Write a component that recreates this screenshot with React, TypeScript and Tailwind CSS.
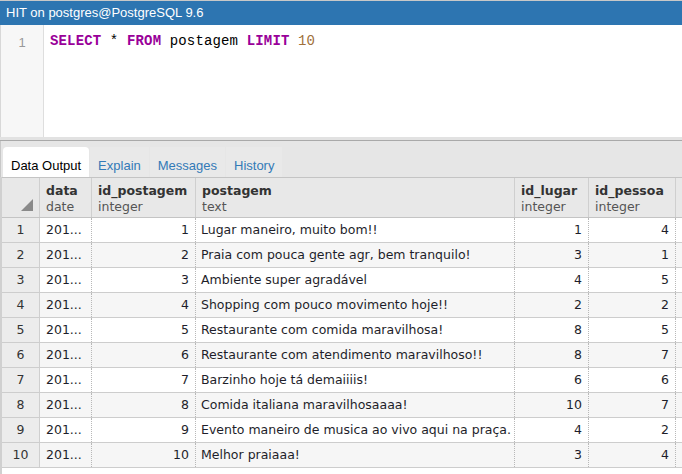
const rows: [number, string, number, number][] = [
  [1, 'Lugar maneiro, muito bom!!', 1, 4],
  [2, 'Praia com pouca gente agr, bem tranquilo!', 3, 1],
  [3, 'Ambiente super agradável', 4, 5],
  [4, 'Shopping com pouco movimento hoje!!', 2, 2],
  [5, 'Restaurante com comida maravilhosa!', 8, 5],
  [6, 'Restaurante com atendimento maravilhoso!!', 8, 7],
  [7, 'Barzinho hoje tá demaiiiis!', 6, 6],
  [8, 'Comida italiana maravilhosaaaa!', 10, 7],
  [9, 'Evento maneiro de musica ao vivo aqui na praça.', 4, 2],
  [10, 'Melhor praiaaa!', 3, 4],
]

const cols = 'grid grid-cols-[38px_52px_104px_319px_74px_87px]'

function HeaderCell({ name, type }: { name: string; type: string }) {
  return (
    <div className="flex flex-col justify-center border-r border-[#cfcfcf] px-[6px] pt-[2px] leading-[16px]">
      <span className="font-bold text-[#333]">{name}</span>
      <span className="text-[#555]">{type}</span>
    </div>
  )
}

export default function App() {
  return (
    <div className="flex h-[474px] w-[682px] flex-col overflow-hidden bg-white font-['Liberation_Sans',sans-serif]">
      <div className="h-px bg-[#c8c8c8]" />
      <div className="flex h-[24px] items-center bg-[#2d75b1] px-[6px] text-[13px] text-white">
        HIT on postgres@PostgreSQL 9.6
      </div>

      {/* editor */}
      <div className="flex h-[112px] border-l border-[#d8d8d8]">
        <div className="w-[43px] border-r border-[#dedede] bg-[#f7f7f7] pt-[8px] text-center text-[13px] text-[#999]">
          1
        </div>
        <div className="pl-[6px] pt-[6px] font-['Liberation_Mono',monospace] text-[14px] tracking-[0.15px] text-black">
          <span className="font-bold text-[#990099]">SELECT</span> *{' '}
          <span className="font-bold text-[#990099]">FROM</span> postagem{' '}
          <span className="font-bold text-[#990099]">LIMIT</span>{' '}
          <span className="text-[#a0703a]">10</span>
        </div>
      </div>
      <div className="h-[3px] bg-[#e2e2e2]" />
      <div className="h-px bg-[#a9a9a9]" />

      {/* tabs */}
      <div className="flex h-[36px] items-end border-l border-[#c8c8c8] bg-[#e6e6e6] pl-[2px] text-[13px]">
        <div className="flex h-[30px] items-center rounded-t-[4px] bg-white px-[8px] pt-[8px] text-black">
          Data Output
        </div>
        <div className="ml-px flex h-[30px] items-center bg-[#e9e9e9] px-[8px] pt-[8px] text-[#337ab7]">
          Explain
        </div>
        <div className="ml-px flex h-[30px] items-center bg-[#e9e9e9] px-[8px] pt-[8px] text-[#337ab7]">
          Messages
        </div>
        <div className="ml-px flex h-[30px] items-center bg-[#e9e9e9] px-[8px] pt-[8px] text-[#337ab7]">
          History
        </div>
      </div>

      {/* grid */}
      <div className="flex-1 border-l-2 border-[#d0d0d0] font-['DejaVu_Sans',sans-serif] text-[12.5px]">
        <div className={`${cols} h-[41px] border-t border-b border-[#c4c4c4] bg-[#e8e8e8]`}>
          <div className="relative border-r border-[#cfcfcf]">
            <svg className="absolute bottom-[6px] right-[6px]" width="12" height="12" viewBox="0 0 12 12">
              <polygon points="12,0 12,12 0,12" fill="#8a8a8a" />
            </svg>
          </div>
          <HeaderCell name="data" type="date" />
          <HeaderCell name="id_postagem" type="integer" />
          <HeaderCell name="postagem" type="text" />
          <HeaderCell name="id_lugar" type="integer" />
          <HeaderCell name="id_pessoa" type="integer" />
        </div>
        {rows.map(([id, text, lugar, pessoa], i) => (
          <div
            key={id}
            className={`${cols} h-[25px] border-b border-[#cdcdcd] text-[#1e1e2a] ${i % 2 ? 'bg-[#f6f6f6]' : 'bg-white'}`}
          >
            <div className="flex items-center justify-center border-r border-[#cfcfcf] bg-[#ececec] text-[#333]">
              {id}
            </div>
            <div className="flex items-center border-r border-dotted border-[#b8b8b8] px-[6px]">201...</div>
            <div className="flex items-center justify-end border-r border-dotted border-[#b8b8b8] px-[6px]">
              {id}
            </div>
            <div className="flex items-center overflow-hidden whitespace-nowrap border-r border-dotted border-[#b8b8b8] px-[5px]">
              {text}
            </div>
            <div className="flex items-center justify-end border-r border-dotted border-[#b8b8b8] px-[6px]">
              {lugar}
            </div>
            <div className="flex items-center justify-end border-r border-dotted border-[#b8b8b8] px-[6px]">
              {pessoa}
            </div>
          </div>
        ))}
      </div>
    </div>
  )
}
